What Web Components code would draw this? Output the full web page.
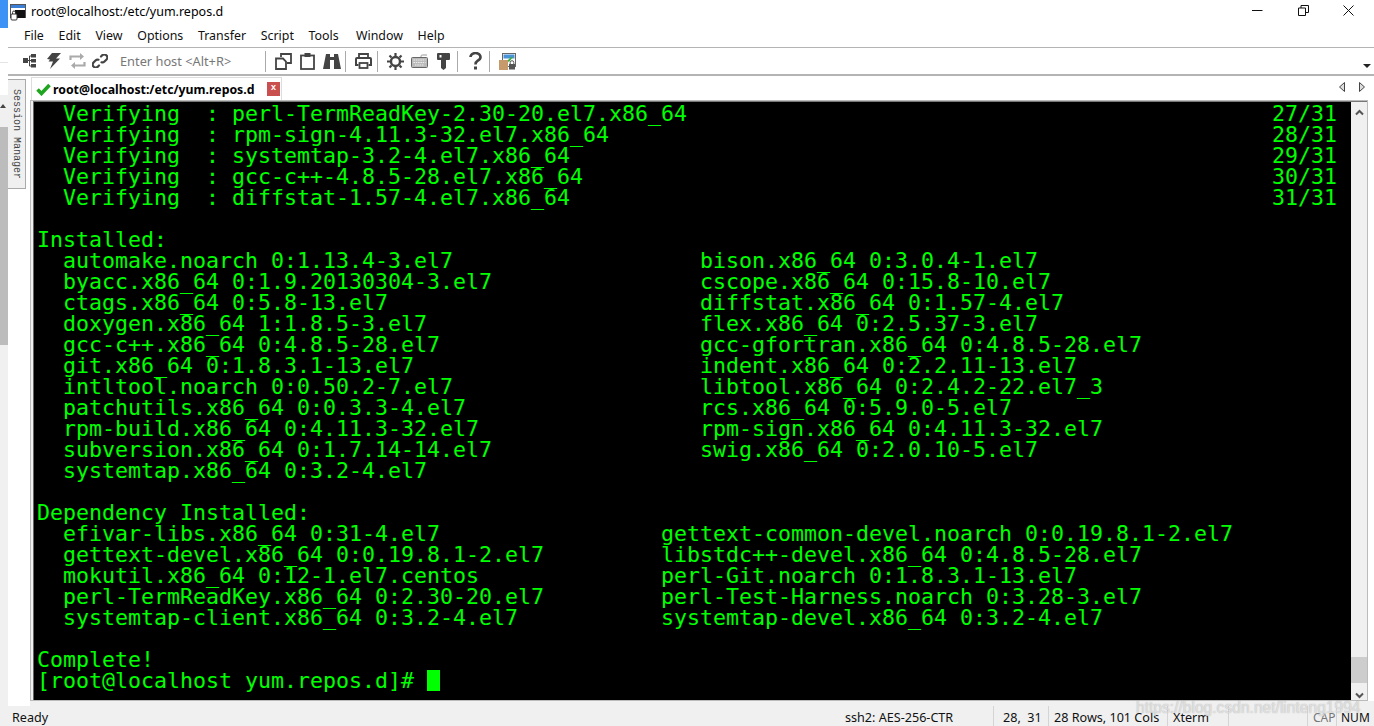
<!DOCTYPE html>
<html>
<head>
<meta charset="utf-8">
<title>root@localhost:/etc/yum.repos.d</title>
<style>
  html, body { margin: 0; height: 100%; overflow: hidden; background: #fff; }
  body { font: 13px "Noto Sans", "Open Sans", sans-serif; color: #111; }
</style>
</head>
<body>
<crt-app></crt-app>

<template id="app-tpl">
  <style>
    :host { display: flex; width: 1374px; height: 726px; position: relative; overflow: hidden; }
    .main { flex: 1; display: flex; flex-direction: column; min-width: 0; }
    .work { flex: 1; display: flex; min-height: 0; }
    .mark {
      position: absolute; left: 1136px; top: 699px;
      font: 15.6px "Liberation Sans", sans-serif;
      color: rgba(255,255,255,.62);
      text-shadow: 0 0 1px rgba(130,130,130,.75);
      white-space: nowrap;
    }
  </style>
  <back-strip></back-strip>
  <div class="main">
    <title-bar>root@localhost:/etc/yum.repos.d</title-bar>
    <menu-bar></menu-bar>
    <tool-bar></tool-bar>
    <div class="work">
      <session-rail>Session Manager</session-rail>
      <term-pane></term-pane>
    </div>
    <status-bar></status-bar>
  </div>
  <div class="mark">https://blog.csdn.net/linteng1994</div>
</template>

<script>
  function define(name, html, setup) {
    customElements.define(name, class extends HTMLElement {
      constructor() {
        super();
        this.attachShadow({ mode: "open" }).innerHTML = html;
        if (setup) setup(this.shadowRoot);
      }
    });
  }

  customElements.define("crt-app", class extends HTMLElement {
    constructor() {
      super();
      this.attachShadow({ mode: "open" })
        .appendChild(document.getElementById("app-tpl").content.cloneNode(true));
    }
  });

  // sliver of the window sitting behind this one
  define("back-strip", `
    <style>
      :host { display: flex; flex-direction: column; width: 8px; flex: none; background: #fff; }
      .blue { height: 28px; background: #3c93f5; }
      .gap { height: 34px; }
      .rule { height: 1px; background: #e4e4e4; }
      .gap2 { height: 32px; background: #fff; }
      .head { height: 32px; background: #f0f0f0; position: relative; }
      .head::after { content: ""; position: absolute; left: 0; top: 9px; border: 3px solid transparent; border-bottom: 4px solid #444; border-top: 0; }
      .thumb { height: 218px; background: #bcbcbc; }
      .rest { flex: 1; background: #f0f0f0; }
    </style>
    <div class="blue"></div><div class="gap"></div><div class="rule"></div><div class="gap2"></div>
    <div class="head"></div><div class="thumb"></div><div class="rest"></div>
  `);

  define("title-bar", `
    <style>
      :host { display: flex; align-items: center; height: 24px; background: #fff; flex: none; }
      .ico { margin: 0 5px 0 2px; flex: none; display: block; }
      .t { flex: 1; font: 12.5px "Noto Sans", sans-serif; color: #000; white-space: nowrap; position: relative; top: -1px; }
      .btns { display: flex; flex: none; margin-right: 2.5px; }
      .btns svg { display: block; }
      .b { width: 45.5px; display: flex; justify-content: center; position: relative; top: -2px; }
    </style>
    <svg class="ico" width="16" height="17" viewBox="0 0 16 17">
      <rect x=".5" y=".5" width="15" height="13" fill="#fff" stroke="#555"/>
      <rect x="1" y="1" width="14" height="3" fill="#3a7fd5"/>
      <rect x="5" y="6" width="10" height="8" fill="#111"/>
      <rect x="1" y="10" width="6" height="6" rx="1" fill="#fff" stroke="#333"/>
      <path d="M2.500 10V8.500a1.500 1.500 0 0 1 3 0V10" fill="none" stroke="#333"/>
    </svg>
    <span class="t"><slot></slot></span>
    <div class="btns">
      <div class="b"><svg width="11" height="11" viewBox="0 0 11 11"><path d="M0 5.500h10.500" stroke="#111" stroke-width="1"/></svg></div>
      <div class="b"><svg width="11" height="11" viewBox="0 0 11 11"><path d="M.5 3h7v7.500h-7zM3 3V.5h7.500v7H7.500" fill="none" stroke="#111"/></svg></div>
      <div class="b"><svg width="11" height="11" viewBox="0 0 11 11"><path d="M.5.5l10 10M10.500.5l-10 10" stroke="#111" stroke-width="1"/></svg></div>
    </div>
  `);

  define("menu-bar", `
    <style>
      :host { display: flex; gap: 14.7px; align-items: center; height: 23px; padding-left: 16px; flex: none;
        background: #fff; border-bottom: 1px solid #b4b4b4; font: 12.4px "Noto Sans", sans-serif; color: #111; }
      .win { margin-left: 2.500px; }
    </style>
    <span>File</span><span>Edit</span><span>View</span><span>Options</span><span>Transfer</span>
    <span>Script</span><span>Tools</span><span class="win">Window</span><span>Help</span>
  `);

  const c = "#444";
  define("tool-bar", `
    <style>
      :host { display: flex; align-items: center; height: 26px; flex: none; background: #fff;
        border-bottom: 2px solid #b4b4b4; position: relative; box-sizing: content-box; }
      svg { display: block; flex: none; }
      .sep { width: 1px; height: 21px; background: #aaa; flex: none; }
      .host { font: 12.8px "Noto Sans", sans-serif; color: #777; width: 145px; flex: none; white-space: nowrap; }
      .drop { position: absolute; right: 3px; top: 16px; border: 4px solid transparent; border-top: 4px solid #222; border-bottom: 0; }
    </style>
    <svg style="margin-left:15px" width="13" height="14" viewBox="0 0 13 14"><path d="M0 4h5v5H0zM8 0h5v3.500H8zM8 5h5v3.500H8zM8 10h5v3.500H8z" fill="${c}"/><path d="M6.500 2v10M5 6.500h3M6.500 2H8M6.500 12H8" stroke="${c}"/></svg>
    <svg style="margin-left:11px" width="14" height="16" viewBox="0 0 14 16"><path d="M5 0h9L9 5.500h4L3 16l3-7.500H1.500L3 6.500 0 6z" fill="${c}"/></svg>
    <svg style="margin-left:8px" width="17" height="16" viewBox="0 0 17 16"><path d="M1.500 7V3.500h11M15.500 9v3.500h-11" fill="none" stroke="#aaa" stroke-width="2.200"/><path d="M11 0l4 3.500-4 3.500zM6 9l-4 3.500L6 16z" fill="#aaa"/></svg>
    <svg style="margin-left:6px" width="16" height="14" viewBox="0 0 16 14"><path d="M9 2.500l1-1a3 3 0 0 1 4.500 4l-2 2a3 3 0 0 1-3 .8M7 11.500l-1 1a3 3 0 0 1-4.500-4l2-2a3 3 0 0 1 3-.8" fill="none" stroke="${c}" stroke-width="2.200" stroke-linecap="round"/></svg>
    <span class="host" style="margin-left:12px">Enter host &lt;Alt+R&gt;</span>
    <span class="sep"></span>
    <svg style="margin-left:9px" width="17" height="17" viewBox="0 0 17 17"><path d="M6 4V1h6l4 0v9h-4M1 5.500h7l3 3V16H1z" fill="none" stroke="${c}" stroke-width="1.800"/></svg>
    <svg style="margin-left:8px" width="15" height="17" viewBox="0 0 15 17"><rect x="1" y="2.500" width="13" height="13.500" fill="none" stroke="${c}" stroke-width="1.800"/><rect x="4.500" y="0" width="6" height="4" fill="${c}"/></svg>
    <svg style="margin-left:8px" width="18" height="16" viewBox="0 0 18 16"><path d="M3 1h4v3h4V1h4l3 15h-7V7H7v9H0z" fill="${c}"/></svg>
    <span class="sep" style="margin-left:4px"></span>
    <svg style="margin-left:9px" width="17" height="16" viewBox="0 0 17 16"><path d="M4 5V1h9v4" fill="none" stroke="${c}" stroke-width="1.800"/><path d="M3.500 12H1V6a1 1 0 0 1 1-1h13a1 1 0 0 1 1 1v6h-2.500" fill="none" stroke="${c}" stroke-width="2"/><rect x="4.500" y="10" width="8" height="5" fill="none" stroke="${c}" stroke-width="1.800"/></svg>
    <span class="sep" style="margin-left:5px"></span>
    <svg style="margin-left:9px" width="17" height="17" viewBox="0 0 17 17"><circle cx="8.500" cy="8.500" r="4.500" fill="none" stroke="${c}" stroke-width="2.400"/><path d="M8.500 0v3M8.500 14v3M0 8.500h3M14 8.500h3M2.500 2.500l2 2M12.500 12.500l2 2M14.500 2.500l-2 2M4.500 12.500l-2 2" stroke="${c}" stroke-width="2.200"/></svg>
    <svg style="margin-left:7px" width="17" height="14" viewBox="0 0 17 14"><path d="M10 3.500V2c0-1 1-1 3-1h3" fill="none" stroke="#999"/><rect x=".5" y="3.500" width="16" height="10" rx="1" fill="#bbb" stroke="#666"/><path d="M2.500 6h12M2.500 8.500h12M4 11h9" stroke="#eee" stroke-dasharray="1.500 .8"/></svg>
    <svg style="margin-left:9px" width="13" height="17" viewBox="0 0 13 17"><path fill-rule="evenodd" d="M1 0h11a1 1 0 0 1 1 1v5a1 1 0 0 1-1 1H9v8l-2.500 2L4 15V7H1a1 1 0 0 1-1-1V1a1 1 0 0 1 1-1zm1.500 2v2.500h2V2z" fill="${c}"/></svg>
    <span class="sep" style="margin-left:7px"></span>
    <svg style="margin-left:11px" width="13" height="18" viewBox="0 0 13 18"><path d="M1.500 5a5 4 0 1 1 7.500 3.500C7.500 9.500 6.500 10 6.500 12.500" fill="none" stroke="${c}" stroke-width="2.600"/><rect x="5" y="14.500" width="3" height="3" fill="${c}"/></svg>
    <span class="sep" style="margin-left:7px"></span>
    <svg style="margin-left:9px" width="17" height="17" viewBox="0 0 17 17"><rect x="3.500" y=".5" width="13" height="13" fill="#fff" stroke="#666"/><rect x="4.500" y="1.500" width="11" height="4" fill="#4a93d8"/><path d="M8 8l4-4 2 0-4 5z" fill="#3cae3c"/><rect x="0" y="7" width="9" height="10" fill="#c79a6b"/><rect x="10" y="11" width="6" height="5.500" fill="#555"/><path d="M11.200 11V9.500a1.800 1.800 0 0 1 3.600 0V11" fill="none" stroke="#555"/></svg>
    <i class="drop"></i>
  `);

  define("session-rail", `
    <style>
      :host { display: block; width: 22px; flex: none; background: #fff; padding-top: 3px; box-sizing: border-box; }
      .tab { width: 18px; height: 110px; box-sizing: border-box; background: #f0f0f0; border: 1px solid #aaa; border-left: 0; }
      .v { writing-mode: vertical-rl; font: 10px/17px "Liberation Mono", monospace; color: #444; padding-top: 9px; white-space: nowrap; }
    </style>
    <div class="tab"><div class="v"><slot></slot></div></div>
  `);

  define("term-pane", `
    <style>
      :host { display: flex; flex-direction: column; flex: 1; min-width: 0; background: #fff; }
      .tabs { height: 24px; flex: none; display: flex; align-items: flex-end; position: relative; }
      .tab { height: 23px; width: 251px; margin-left: 1px; box-sizing: border-box; border: 1px solid #ddd; border-bottom: 0; display: flex; align-items: center; background: #fff; }
      .tab .chk { margin-left: 4px; flex: none; }
      .tab b { font: bold 12.3px "Noto Sans", sans-serif; margin-left: 2px; white-space: nowrap; width: 214px; color: #000; }
      .x { width: 13px; height: 14px; background: #c9504f; color: #fff; font: bold 9px/13px "Liberation Mono", monospace; text-align: center; flex: none; }
      .arrows { position: absolute; right: 9px; top: 6px; display: flex; gap: 14px; }
      .frame { flex: 1; display: flex; min-height: 0; margin-right: 6px; border: 1px solid #bbb; padding: 0 0 0 2px; background: #f0f0f0; }
      .shell { flex: 1; display: flex; min-width: 0; border-top: 1px solid #777; border-left: 1px solid #666; }
      .foot { height: 5px; flex: none; background: #f0f0f0; }
      svg { display: block; }
    </style>
    <div class="tabs">
      <div class="tab">
        <svg class="chk" width="15" height="13" viewBox="0 0 15 13"><path d="M1.500 6.500l4 4 8-8.500" fill="none" stroke="#1fa51f" stroke-width="3.600"/></svg>
        <b>root@localhost:/etc/yum.repos.d</b>
        <span class="x">x</span>
      </div>
      <div class="arrows">
        <svg width="6" height="10" viewBox="0 0 6 10"><path d="M5.500.5v9L.5 5z" fill="#ddd" stroke="#444"/></svg>
        <svg width="6" height="10" viewBox="0 0 6 10"><path d="M.5.5v9L5.500 5z" fill="#ddd" stroke="#444"/></svg>
      </div>
    </div>
    <div class="frame">
      <div class="shell">
        <term-view></term-view>
        <scroll-bar></scroll-bar>
      </div>
    </div>
    <div class="foot"></div>
  `);

  // each row: [left, col, right]
  const rows = [
    ["  Verifying  : perl-TermReadKey-2.30-20.el7.x86_64", 95, "27/31"],
    ["  Verifying  : rpm-sign-4.11.3-32.el7.x86_64", 95, "28/31"],
    ["  Verifying  : systemtap-3.2-4.el7.x86_64", 95, "29/31"],
    ["  Verifying  : gcc-c++-4.8.5-28.el7.x86_64", 95, "30/31"],
    ["  Verifying  : diffstat-1.57-4.el7.x86_64", 95, "31/31"],
    [""],
    ["Installed:"],
    ["  automake.noarch 0:1.13.4-3.el7", 51, "bison.x86_64 0:3.0.4-1.el7"],
    ["  byacc.x86_64 0:1.9.20130304-3.el7", 51, "cscope.x86_64 0:15.8-10.el7"],
    ["  ctags.x86_64 0:5.8-13.el7", 51, "diffstat.x86_64 0:1.57-4.el7"],
    ["  doxygen.x86_64 1:1.8.5-3.el7", 51, "flex.x86_64 0:2.5.37-3.el7"],
    ["  gcc-c++.x86_64 0:4.8.5-28.el7", 51, "gcc-gfortran.x86_64 0:4.8.5-28.el7"],
    ["  git.x86_64 0:1.8.3.1-13.el7", 51, "indent.x86_64 0:2.2.11-13.el7"],
    ["  intltool.noarch 0:0.50.2-7.el7", 51, "libtool.x86_64 0:2.4.2-22.el7_3"],
    ["  patchutils.x86_64 0:0.3.3-4.el7", 51, "rcs.x86_64 0:5.9.0-5.el7"],
    ["  rpm-build.x86_64 0:4.11.3-32.el7", 51, "rpm-sign.x86_64 0:4.11.3-32.el7"],
    ["  subversion.x86_64 0:1.7.14-14.el7", 51, "swig.x86_64 0:2.0.10-5.el7"],
    ["  systemtap.x86_64 0:3.2-4.el7"],
    [""],
    ["Dependency Installed:"],
    ["  efivar-libs.x86_64 0:31-4.el7", 48, "gettext-common-devel.noarch 0:0.19.8.1-2.el7"],
    ["  gettext-devel.x86_64 0:0.19.8.1-2.el7", 48, "libstdc++-devel.x86_64 0:4.8.5-28.el7"],
    ["  mokutil.x86_64 0:12-1.el7.centos", 48, "perl-Git.noarch 0:1.8.3.1-13.el7"],
    ["  perl-TermReadKey.x86_64 0:2.30-20.el7", 48, "perl-Test-Harness.noarch 0:3.28-3.el7"],
    ["  systemtap-client.x86_64 0:3.2-4.el7", 48, "systemtap-devel.x86_64 0:3.2-4.el7"],
    [""],
    ["Complete!"],
  ];

  define("term-view", `
    <style>
      :host { display: block; flex: 1; min-width: 0; background: #000; color: #0f0; overflow: hidden; padding: 1px 0 0 3px; }
      pre { margin: 0; font: 21.6px/21px "DejaVu Sans Mono", monospace; letter-spacing: 0; }
      .cur { display: inline-block; width: 13px; height: 21px; background: #0f0; vertical-align: top; }
    </style>
    <pre></pre>
  `, root => {
    const pre = root.querySelector("pre");
    pre.textContent = rows.map(([l, col, r]) => r ? l.padEnd(col) + r : l).join("\n")
      + "\n[root@localhost yum.repos.d]# ";
    const cur = document.createElement("span");
    cur.className = "cur";
    pre.appendChild(cur);
  });

  define("scroll-bar", `
    <style>
      :host { display: flex; flex-direction: column; width: 16px; flex: none; background: #f0f0f0; align-items: center; }
      svg { display: block; flex: none; }
      .sp { flex: 1; }
      .thumb { width: 100%; height: 26px; background: #cdcdcd; flex: none; }
    </style>
    <svg style="margin-top:7px" width="9" height="7" viewBox="0 0 9 7"><path d="M1 5.500l3.500-3.500L8 5.500" fill="none" stroke="#555" stroke-width="2"/></svg>
    <div class="sp"></div>
    <div class="thumb"></div>
    <svg style="margin:9px 0 1px" width="9" height="7" viewBox="0 0 9 7"><path d="M1 1.500L4.500 5 8 1.500" fill="none" stroke="#555" stroke-width="2"/></svg>
  `);

  define("status-bar", `
    <style>
      :host { display: grid; grid-template-columns: 837px 149px 55px 119px 61px 79px 29px 1fr; height: 20px; flex: none;
        background: #f0f0f0; font: 12.6px/24px "Noto Sans", sans-serif; color: #111; white-space: pre; }
      span { border-right: 1px solid #d4d4d4; box-sizing: border-box; }
      .plain { border: 0; }
    </style>
    <span class="plain" style="padding-left:4px">Ready</span>
    <span>ssh2: AES-256-CTR</span>
    <span style="padding-left:9px">28,  31</span>
    <span style="padding-left:5px">28 Rows, 101 Cols</span>
    <span style="padding-left:5px">Xterm</span>
    <span></span>
    <span style="padding-left:5px;color:#777;font-size:12px">CAP</span>
    <span class="plain" style="padding-left:4px;font-size:12px">NUM</span>
  `);
</script>
</body>
</html>
